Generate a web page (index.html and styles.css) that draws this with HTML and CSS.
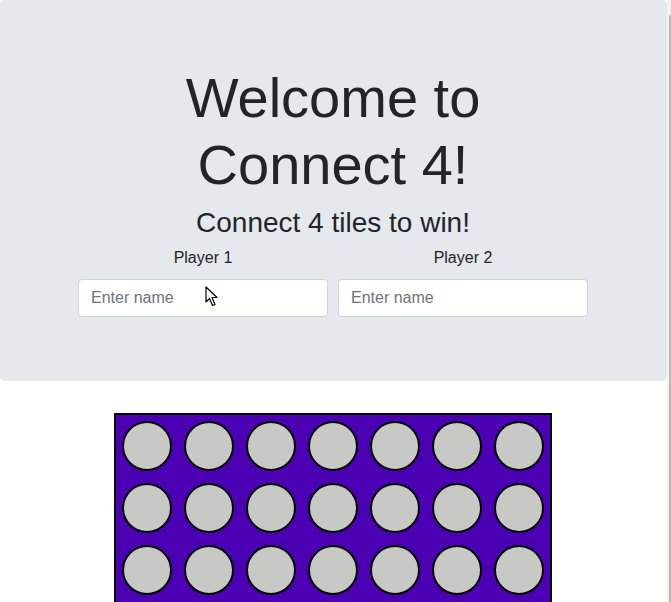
FILE: index.html
```html
<!DOCTYPE html>
<html lang="en">
<head>
<meta charset="utf-8">
<title>Connect 4</title>
<link rel="stylesheet" href="styles.css">
</head>
<body>
<div class="jumbotron">
  <h1 class="title">Welcome to<br>Connect 4!</h1>
  <h3 class="subtitle">Connect 4 tiles to win!</h3>
  <div class="players">
    <div class="player">
      <label class="player-label" for="p1">Player 1</label>
      <input class="name-input" id="p1" type="text" placeholder="Enter name">
    </div>
    <div class="player">
      <label class="player-label" for="p2">Player 2</label>
      <input class="name-input" id="p2" type="text" placeholder="Enter name">
    </div>
  </div>
</div>
<div class="board">
  <div class="cell"></div><div class="cell"></div><div class="cell"></div><div class="cell"></div><div class="cell"></div><div class="cell"></div><div class="cell"></div>
  <div class="cell"></div><div class="cell"></div><div class="cell"></div><div class="cell"></div><div class="cell"></div><div class="cell"></div><div class="cell"></div>
  <div class="cell"></div><div class="cell"></div><div class="cell"></div><div class="cell"></div><div class="cell"></div><div class="cell"></div><div class="cell"></div>
  <div class="cell"></div><div class="cell"></div><div class="cell"></div><div class="cell"></div><div class="cell"></div><div class="cell"></div><div class="cell"></div>
  <div class="cell"></div><div class="cell"></div><div class="cell"></div><div class="cell"></div><div class="cell"></div><div class="cell"></div><div class="cell"></div>
  <div class="cell"></div><div class="cell"></div><div class="cell"></div><div class="cell"></div><div class="cell"></div><div class="cell"></div><div class="cell"></div>
</div>
<div class="scroll-track"><div class="scroll-thumb"></div></div>
<svg class="cursor" width="14" height="22" viewBox="0 0 14 22"><path d="M1 1 L1 16 L4.5 12.5 L7.5 19.5 L10 18.5 L7 11.5 L12 11.5 Z" fill="#fff" stroke="#000" stroke-width="1.2" stroke-linejoin="round"/></svg>
</body>
</html>
```
FILE: styles.css
```css
html, body {
  margin: 0;
  padding: 0;
}
html {
  background: #fffffd;
}
body {
  font-family: "Liberation Sans", Arial, sans-serif;
  color: #212529;
  width: 667px;
  position: relative;
}
.jumbotron {
  box-sizing: border-box;
  background: #e5e8ec;
  border-radius: 5px;
  padding: 64px 32px 64px 31px;
  margin-bottom: 32px;
  text-align: center;
}
.title {
  font-size: 56px;
  font-weight: 400;
  line-height: 1.2;
  margin: 0 0 8px;
}
.subtitle {
  font-size: 28px;
  font-weight: 400;
  line-height: 1.2;
  margin: 0 0 6px;
}
.players {
  display: flex;
  justify-content: center;
  gap: 10px;
}
.player {
  width: 250px;
  display: flex;
  flex-direction: column;
  align-items: center;
}
.player-label {
  font-size: 16px;
  line-height: 24px;
  margin-bottom: 9px;
}
.name-input {
  width: 100%;
  box-sizing: border-box;
  height: 38px;
  padding: 6px 12px;
  font-family: "Liberation Sans", Arial, sans-serif;
  font-size: 16px;
  color: #495057;
  background: #fffffd;
  border: 1px solid #ced4da;
  border-radius: 4px;
  outline: none;
}
.name-input::placeholder {
  color: #6c757d;
}
.board {
  width: 438px;
  box-sizing: border-box;
  margin: 0 0 0 calc(50% - 219.5px);
  border: 2px solid #000;
  background: #4b00b4;
  display: grid;
  grid-template-columns: repeat(7, 62px);
}
.cell {
  width: 50px;
  height: 50px;
  margin: 6px;
  box-sizing: border-box;
  border-radius: 50%;
  border: 2px solid #000;
  background: #c8c8c4;
}
.scroll-track {
  position: fixed;
  top: 0;
  right: 0;
  width: 4px;
  height: 602px;
  background: #f3f3f0;
}
.scroll-thumb {
  position: absolute;
  top: 15px;
  right: 0;
  width: 2px;
  bottom: 0;
  background: #b9b9b5;
}
.cursor {
  position: absolute;
  left: 205px;
  top: 286px;
}
```
